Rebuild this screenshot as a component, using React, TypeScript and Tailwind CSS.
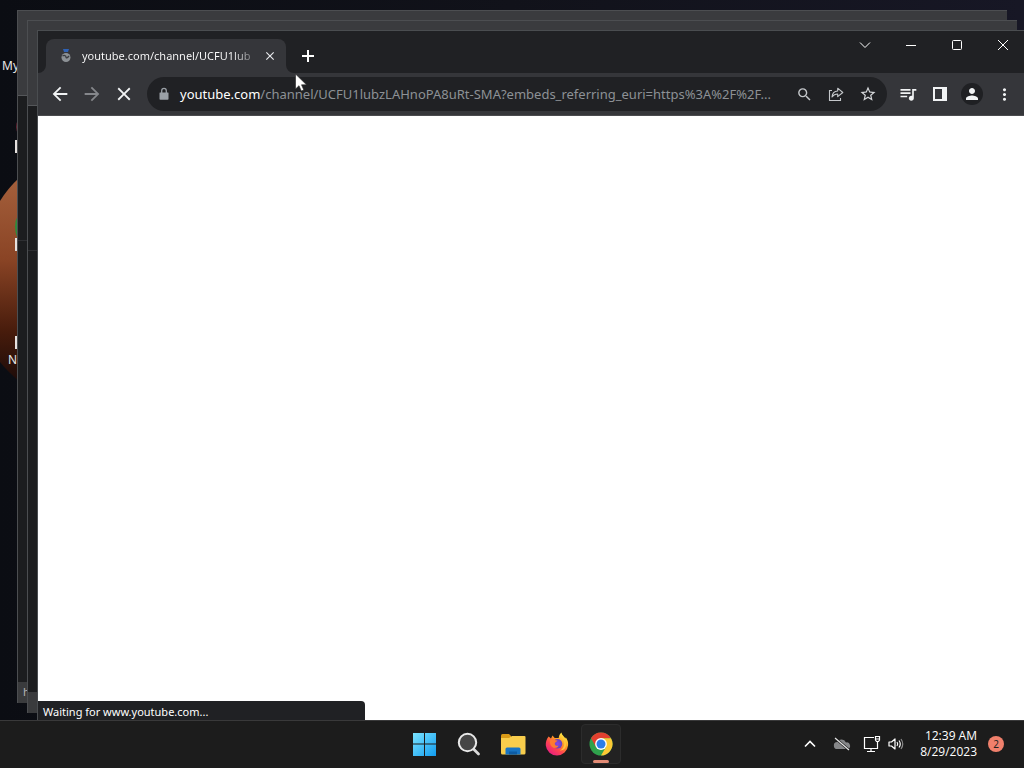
import type {ReactNode} from "react";
import {
  MdArrowBack,
  MdArrowForward,
  MdClose,
  MdMoreVert,
  MdPerson,
  MdQueueMusic,
  MdSearch,
  MdStarBorder,
} from "react-icons/md";

const IconButton = ({label, className = "", children}: {label: string; className?: string; children: ReactNode}) => (
  <button aria-label={label} className={`flex shrink-0 items-center justify-center ${className}`} type="button">
    {children}
  </button>
);

const Wallpaper = () => (
  <div className="absolute inset-0 bg-gradient-to-r from-[#0b0d13] via-[#11121a] to-[#171725]">
    <svg aria-hidden="true" className="absolute left-0 top-0" height="400" width="40">
      <defs>
        <linearGradient id="planet" x1="0" x2="0" y1="0" y2="1">
          <stop offset="0" stopColor="#a5603c" />
          <stop offset="0.4" stopColor="#8a4425" />
          <stop offset="0.75" stopColor="#481c0c" />
          <stop offset="1" stopColor="#1c0b09" />
        </linearGradient>
      </defs>
      <path d="M0 201 Q8 188 20 177 V382 Q8 372 0 362Z" fill="url(#planet)" />
      <path d="M18 119 Q15 126 18 136Z" fill="#b8384f" />
      <path d="M18 215 Q12 226 18 240Z" fill="#2f8a3c" />
      <path d="M15 140h3v13h-3z M15 238h3v13h-3z M15 336h3v13h-3z" fill="#e6e1df" />
    </svg>
    <span className="absolute left-[2px] top-[58px] text-[12px] leading-4 text-[#e8e8e8]">My</span>
    <span className="absolute left-[8px] top-[352px] text-[12px] leading-4 text-[#e8e8e8]">N</span>
  </div>
);

const BackWindow = ({className, letter}: {className: string; letter: string}) => (
  <div className={`absolute flex flex-col border-l border-t border-[#4c4e51] bg-[#1c1d1f] ${className}`}>
    <div className="h-[85px] border-b border-[#55575a] bg-[#3a3b3e]" />
    <div className="h-[145px] border-b border-[#2e2f32]" />
    <div className="flex-1" />
    <div className="h-[21px] w-20 overflow-hidden bg-[#3a3b3d] pl-[5px] text-[11px] leading-5 text-[#b5b5b5]">
      {letter}
    </div>
  </div>
);

const TabStrip = () => (
  <div className="flex h-[42px] items-end bg-[#202124]">
    <svg aria-hidden="true" height="8" width="8">
      <path d="M8 0 A8 8 0 0 1 0 8 H8Z" fill="#35363a" />
    </svg>
    <div className="flex h-[34px] w-60 items-center rounded-t-lg bg-[#35363a] pl-3">
      <svg aria-hidden="true" className="shrink-0" height="16" viewBox="0 0 16 16" width="16">
        <path d="M5 1h6l-1 3H6z" fill="#2f62b5" />
        <circle cx="8" cy="9.500" fill="#8d9296" r="4.500" />
        <path d="M4.500 8c1.500-1 3.500-.5 3.500 1s1.500 1 3-1" fill="none" stroke="#3a3c40" strokeWidth="1.300" />
      </svg>
      <span className="ml-2 w-[176px] whitespace-nowrap bg-gradient-to-r from-white from-85% to-[#55565a] bg-clip-text text-[11px] leading-4 text-transparent">
        youtube.com/channel/UCFU1lub
      </span>
      <IconButton className="size-6 text-[#e8eaed]" label="Close tab">
        <MdClose size={14} />
      </IconButton>
    </div>
    <svg aria-hidden="true" height="8" width="8">
      <path d="M0 0 A8 8 0 0 0 8 8 H0Z" fill="#35363a" />
    </svg>
    <IconButton className="h-[34px] w-7 text-white" label="New tab">
      <svg fill="none" height="14" stroke="currentColor" strokeWidth="2" viewBox="0 0 14 14" width="14">
        <path d="M7 1v12M1 7h12" />
      </svg>
    </IconButton>
    <div className="ml-auto flex self-start text-white">
      <IconButton className="h-7 w-[46px]" label="Search tabs">
        <svg fill="none" height="12" stroke="currentColor" viewBox="0 0 12 12" width="12">
          <path d="M1 3.500l5 5 5-5" />
        </svg>
      </IconButton>
      <IconButton className="h-7 w-[46px]" label="Minimize">
        <svg height="12" stroke="currentColor" viewBox="0 0 12 12" width="12">
          <path d="M1 6.500h10" />
        </svg>
      </IconButton>
      <IconButton className="h-7 w-[46px]" label="Maximize">
        <svg fill="none" height="12" stroke="currentColor" viewBox="0 0 12 12" width="12">
          <rect height="9" rx="1" width="9" x="1.500" y="1.500" />
        </svg>
      </IconButton>
      <IconButton className="h-7 w-[46px]" label="Close">
        <svg fill="none" height="12" stroke="currentColor" viewBox="0 0 12 12" width="12">
          <path d="M1 1l10 10M11 1L1 11" />
        </svg>
      </IconButton>
    </div>
  </div>
);

const Toolbar = () => (
  <div className="flex h-[43px] items-center border-b border-[#4a4b4e] bg-[#35363a] px-1.5">
    <IconButton className="size-8 text-[#f1f3f4]" label="Back">
      <MdArrowBack size={22} />
    </IconButton>
    <IconButton className="size-8 text-[#85878b]" label="Forward">
      <MdArrowForward size={22} />
    </IconButton>
    <IconButton className="size-8 text-[#f1f3f4]" label="Stop loading">
      <MdClose size={22} />
    </IconButton>
    <div className="ml-[7px] flex h-[34px] min-w-0 flex-1 items-center rounded-full bg-[#202124] pl-[10px] pr-[3px] text-[13px] text-[#9aa0a6]">
      <svg aria-hidden="true" className="shrink-0" height="14" viewBox="0 0 14 14" width="14">
        <path d="M3 5.500h8q.5 0 .5.500v6q0 .8-.8.8H3.300q-.8 0-.8-.8V6q0-.5.5-.5z" fill="currentColor" />
        <path d="M4.700 6V3.700a2.300 2.300 0 0 1 4.600 0V6" fill="none" stroke="currentColor" strokeWidth="1.300" />
      </svg>
      <label className="ml-[9px] pt-px text-white" htmlFor="address">
        youtube.com
      </label>
      <input
        className="min-w-0 flex-1 bg-transparent pt-px text-[#8d9196] outline-none"
        defaultValue="/channel/UCFU1lubzLAHnoPA8uRt-SMA?embeds_referring_euri=https%3A%2F%2F..."
        id="address"
        type="text"
      />
      <IconButton className="size-8 text-[#c4c7ca]" label="Zoom">
        <MdSearch size={17} />
      </IconButton>
      <IconButton className="size-8 text-[#c4c7ca]" label="Share this page">
        <svg fill="none" height="16" stroke="currentColor" strokeWidth="1.100" viewBox="0 0 16 16" width="16">
          <path d="M4 4.500H1.500V14.500H12.500V12" />
          <path d="M4 11C4.300 7.200 6.500 5.200 9.700 5V2.200L14.800 6.500 9.700 10.700V8C7.300 8 5.500 8.800 4 11Z" strokeLinejoin="round" />
        </svg>
      </IconButton>
      <IconButton className="size-8 text-[#d5d7da]" label="Bookmark this tab">
        <MdStarBorder size={18} />
      </IconButton>
    </div>
    <div className="ml-[5px] flex text-[#f1f3f4]">
      <IconButton className="size-8" label="Media controls">
        <MdQueueMusic size={20} />
      </IconButton>
      <IconButton className="size-8" label="Side panel">
        <svg fill="currentColor" height="14" viewBox="0 0 14 14" width="14">
          <path d="M0 0h14v14H0zM2 2v10h7V2z" fillRule="evenodd" />
        </svg>
      </IconButton>
      <IconButton className="size-8" label="Profile">
        <span className="flex size-[22px] items-center justify-center rounded-full bg-[#1f2023]">
          <MdPerson size={18} />
        </span>
      </IconButton>
      <IconButton className="size-8" label="Menu">
        <MdMoreVert size={19} />
      </IconButton>
    </div>
  </div>
);

const BrowserWindow = () => (
  <div className="absolute -right-0.5 bottom-0 left-[37px] top-[30px] flex flex-col border-l border-t border-[#4a4d50] bg-white">
    <TabStrip />
    <Toolbar />
    <main className="flex flex-1 items-end bg-white">
      <p className="h-[19px] w-[327px] rounded-tr bg-[#202124] pl-[5px] text-[11px] leading-[22px] text-white">
        Waiting for www.youtube.com...
      </p>
    </main>
  </div>
);

const WindowsLogo = () => (
  <svg height="24" viewBox="0 0 24 24" width="24">
    <defs>
      <linearGradient id="win" x1="0" x2="1" y1="0" y2="1">
        <stop offset="0" stopColor="#7be4ff" />
        <stop offset="1" stopColor="#119cf0" />
      </linearGradient>
    </defs>
    <path d="M0 1h11v10.500H0zM12 1h11v10.500H12zM0 12.500h11V24H0zM12 12.500h11V24H12z" fill="url(#win)" />
  </svg>
);

const SearchLogo = () => (
  <svg fill="none" height="24" viewBox="0 0 24 24" width="24">
    <path d="M16.500 17l5 5" stroke="#d9d9d9" strokeLinecap="round" strokeWidth="2.800" />
    <circle cx="10.500" cy="10.500" fill="#454545" r="8.700" stroke="#e8e8e8" strokeWidth="2" />
  </svg>
);

const FolderLogo = () => (
  <svg height="24" viewBox="0 0 26 24" width="26">
    <path d="M1 3.500q0-1.500 1.500-1.500H9l2 2v4H1z" fill="#d99a17" />
    <path d="M1 6h8l3-2h12.500q1 0 1 1V21q0 1.500-1.500 1.500H2.500Q1 22.500 1 21z" fill="#f8cd4c" />
    <path d="M5.500 22.500V17q0-1.500 1.500-1.500h12q1.500 0 1.500 1.500v5.500z" fill="#1774c4" />
    <path d="M9 22.500v-3h8v3z" fill="#0d5ca5" />
  </svg>
);

const FirefoxLogo = () => (
  <svg height="24" viewBox="0 0 24 24" width="24">
    <defs>
      <linearGradient id="fox" x1="0.85" x2="0.2" y1="0.1" y2="0.95">
        <stop offset="0" stopColor="#fff047" />
        <stop offset="0.35" stopColor="#ff9a22" />
        <stop offset="0.65" stopColor="#ff4551" />
        <stop offset="1" stopColor="#e81c82" />
      </linearGradient>
      <radialGradient id="globe">
        <stop offset="0" stopColor="#8a45e8" />
        <stop offset="1" stopColor="#6843b8" />
      </radialGradient>
    </defs>
    <path d="M3.600 4.500l2.400 2 1.500-3 2.200 2.600 4-.1C14 4 14.500 2 16.500.5c.2 2.500 2.500 3.700 4 6l.3-1.200c1.700 2.500 2.600 5 2.300 8A11.200 11.200 0 0 1 .8 13.500C.6 10 1.500 7 3.600 4.500z" fill="url(#fox)" />
    <circle cx="12.500" cy="11.800" fill="url(#globe)" r="4.800" />
    <path d="M5 8.500c2-2 4.500-1.500 5.500-.2l2 .2c-.3 1.300-2.200 1.400-2.700 2.700-.2 2 1.500 3 3.700 2.500-1.200 2.300-4 3-6.300 1.300C5.500 13.500 4.500 11 5 8.500z" fill="#ff7a30" />
    <path d="M15 4c2.500 2 4.500 4.500 4.300 8-.1 3-2 5.300-4.500 6.500 5 .2 7-4 6-8C20 7 17 6 15 4z" fill="#ffc53a" />
  </svg>
);

const ChromeLogo = () => (
  <svg height="24" viewBox="0 0 24 24" width="24">
    <circle cx="12" cy="12" fill="#2fa24c" r="11.500" />
    <path d="M2.040 6.250A11.500 11.500 0 0 1 21.960 6.250L12 6.250 7 14.900z" fill="#e2402f" />
    <path d="M21.960 6.250A11.500 11.500 0 0 1 12 23.500L17 14.900 12 6.250z" fill="#fcc934" />
    <circle cx="12" cy="12" fill="#fff" r="5.900" />
    <circle cx="12" cy="12" fill="#2b7de9" r="4.500" />
  </svg>
);

const Taskbar = () => (
  <footer className="grid h-12 grid-cols-[1fr_auto_1fr] items-center border-t border-[#39393a] bg-[#1c1c1c] pb-0.5 text-white">
    <div />
    <nav className="flex gap-1 pl-px">
      <IconButton className="size-10" label="Start">
        <WindowsLogo />
      </IconButton>
      <IconButton className="size-10" label="Search">
        <SearchLogo />
      </IconButton>
      <IconButton className="size-10" label="File Explorer">
        <FolderLogo />
      </IconButton>
      <IconButton className="size-10" label="Firefox">
        <FirefoxLogo />
      </IconButton>
      <IconButton className="relative size-10 rounded border border-[#2c2c2c] bg-[#222222]" label="Google Chrome">
        <ChromeLogo />
        <span className="absolute bottom-0 h-[3px] w-4 rounded-full bg-[#e38b75]" />
      </IconButton>
    </nav>
    <div className="flex items-center justify-end pr-5">
      <IconButton className="size-8" label="Show hidden icons">
        <svg fill="none" height="12" stroke="currentColor" strokeWidth="1.600" viewBox="0 0 12 12" width="12">
          <path d="M1 8.500l5-5 5 5" />
        </svg>
      </IconButton>
      <IconButton className="size-8" label="OneDrive">
        <svg height="16" viewBox="0 0 18 16" width="18">
          <path d="M4.500 13a3.500 3.500 0 0 1-.3-7A5 5 0 0 1 13 6.500a3.300 3.300 0 0 1 1.500 6.500z" fill="#858688" />
          <path d="M2 2l14 12" stroke="#1c1c1c" strokeWidth="2.400" />
          <path d="M2 2l14 12" stroke="#e6e6e6" strokeWidth="1.200" />
        </svg>
      </IconButton>
      <IconButton className="h-8 w-7" label="Network">
        <svg fill="none" height="18" stroke="currentColor" strokeWidth="1.200" viewBox="0 0 18 18" width="18">
          <path d="M11 2.500H1.500V13.500H14.500V7M4 16.500h8M8 13.500v3" />
          <path d="M12.500 1.500h4v3.500l-1 1.500h-2l-1-1.500zM12.500 4h4" />
        </svg>
      </IconButton>
      <IconButton className="h-8 w-5" label="Volume">
        <svg fill="none" height="16" stroke="currentColor" strokeWidth="1.200" viewBox="0 0 16 16" width="16">
          <path d="M1 6h2.500L7 3v10L3.500 10H1z" strokeLinejoin="round" />
          <path d="M9 6q1.500 2 0 4M11 4.500q2.500 3.500 0 7" />
          <path d="M13 3q3.500 5 0 10" stroke="#8a8a8a" />
        </svg>
      </IconButton>
      <time className="ml-[14px] text-right font-['Open_Sans','Noto_Sans',sans-serif] text-[12px] leading-4" dateTime="2023-08-29T00:39">
        12:39 AM
        <br />
        8/29/2023
      </time>
      <span className="ml-[11px] size-4 rounded-full bg-[#f0806c] text-center text-[10px] leading-4 text-[#222222]">2</span>
    </div>
  </footer>
);

const App = () => {
  return (
    <div className="flex h-screen flex-col overflow-hidden font-['Noto_Sans','Open_Sans',sans-serif]">
      <div className="relative flex-1 overflow-hidden">
        <Wallpaper />
        <BackWindow className="bottom-[17px] left-[17px] right-[17px] top-[10px]" letter="h" />
        <BackWindow className="bottom-[7px] left-[27px] right-[7px] top-[20px]" letter="" />
        <BrowserWindow />
        <svg aria-hidden="true" className="absolute left-[295px] top-[73px]" height="19" viewBox="0 0 12 19" width="12">
          <path d="M.5 1v15l3.500-3.300L6.300 18l2.500-1-2.300-5.200h5z" fill="#fff" stroke="#222" strokeWidth="0.600" />
        </svg>
      </div>
      <Taskbar />
    </div>
  );
};

export default App;
